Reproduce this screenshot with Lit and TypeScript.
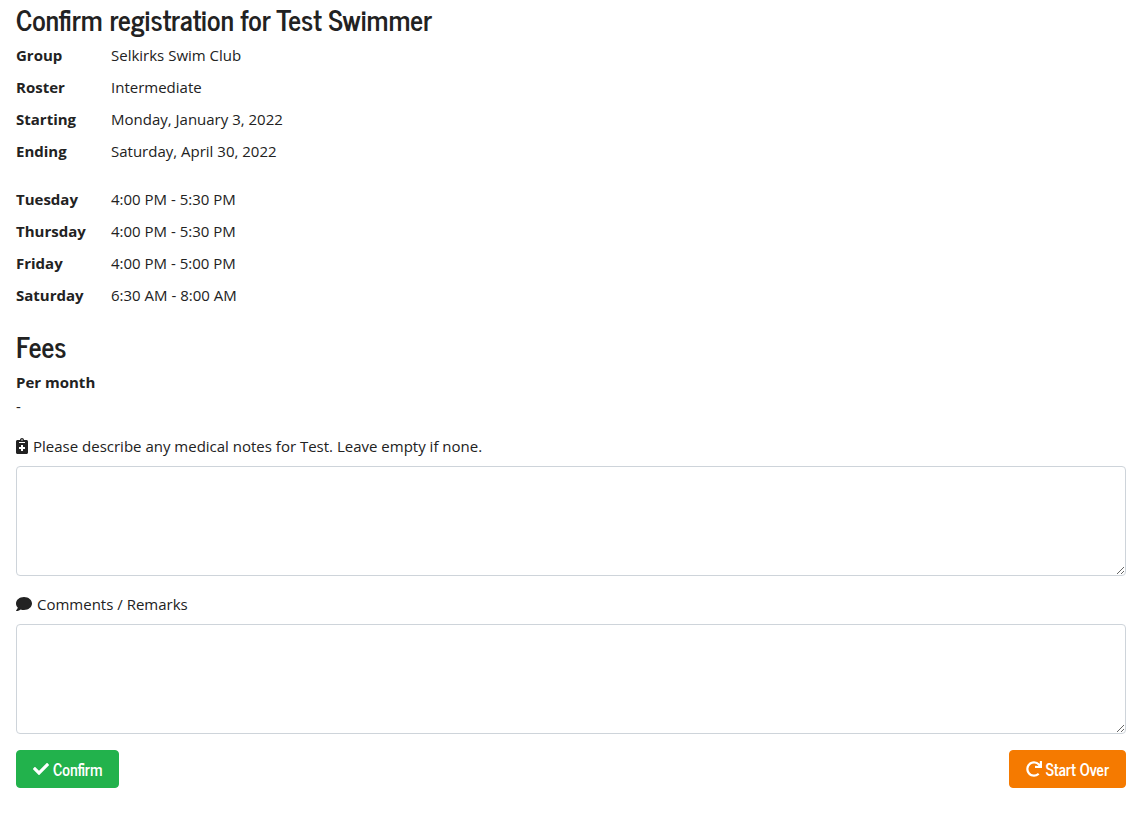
import { LitElement, html, css, svg } from "lit";
import { customElement } from "lit/decorators.js";

const icon = (width: number, path: string) => html`<svg
  class="icon"
  width=${width / 32}
  height="16"
  viewBox="0 0 ${width} 512"
  aria-hidden="true"
>${svg`<path fill="currentColor" d=${path}></path>`}</svg>`;

const NOTES =
  "M336 64h-80c0-35.3-28.7-64-64-64s-64 28.7-64 64H48C21.5 64 0 85.5 0 112v352c0 26.5 21.5 48 48 48h288c26.5 0 48-21.5 48-48V112c0-26.5-21.5-48-48-48zM192 40c13.3 0 24 10.7 24 24s-10.7 24-24 24-24-10.7-24-24 10.7-24 24-24zm96 304c0 4.4-3.6 8-8 8h-56v56c0 4.4-3.6 8-8 8h-48c-4.4 0-8-3.6-8-8v-56h-56c-4.4 0-8-3.6-8-8v-48c0-4.4 3.6-8 8-8h56v-56c0-4.4 3.6-8 8-8h48c4.4 0 8 3.6 8 8v56h56c4.4 0 8 3.6 8 8v48zm0-192c0 4.4-3.6 8-8 8H104c-4.4 0-8-3.6-8-8v-16c0-4.4 3.6-8 8-8h176c4.4 0 8 3.6 8 8v16z";
const COMMENT =
  "M256 32C114.6 32 0 125.1 0 240c0 49.6 21.4 95 57 130.7C44.5 421.1 2.7 466 2.2 466.5c-2.2 2.3-2.8 5.7-1.5 8.7S4.8 480 8 480c66.3 0 116-31.8 140.6-51.4 32.7 12.3 69 19.4 107.4 19.4 141.4 0 256-93.1 256-208S397.4 32 256 32z";
const CHECK =
  "M173.898 439.404l-166.4-166.4c-9.997-9.997-9.997-26.206 0-36.204l36.203-36.204c9.997-9.998 26.207-9.998 36.204 0L192 312.69 432.095 72.596c9.997-9.997 26.207-9.997 36.204 0l36.203 36.204c9.997 9.997 9.997 26.206 0 36.204l-294.4 294.401c-9.998 9.997-26.207 9.997-36.204-.001z";
const REDO =
  "M500.33 0h-47.41a12 12 0 0 0-12 12.57l4 82.76A247.42 247.42 0 0 0 256 8C119.34 8 7.9 119.53 8 256.19 8.1 393.07 119.1 504 256 504a247.1 247.1 0 0 0 166.18-63.91 12 12 0 0 0 .48-17.43l-34-34a12 12 0 0 0-16.38-.55A176 176 0 1 1 402.1 157.8l-101.53-4.87a12 12 0 0 0-12.57 12v47.41a12 12 0 0 0 12 12h200.33a12 12 0 0 0 12-12V12a12 12 0 0 0-12-12z";

const DETAILS = [
  ["Group", "Selkirks Swim Club"],
  ["Roster", "Intermediate"],
  ["Starting", "Monday, January 3, 2022"],
  ["Ending", "Saturday, April 30, 2022"],
];
const SCHEDULE = [
  ["Tuesday", "4:00 PM - 5:30 PM"],
  ["Thursday", "4:00 PM - 5:30 PM"],
  ["Friday", "4:00 PM - 5:00 PM"],
  ["Saturday", "6:30 AM - 8:00 AM"],
];

@customElement("app-root")
export class AppRoot extends LitElement {
  static styles = css`
    :host {
      display: block;
      padding: 2px 18px 28px 16px;
      background: #fff;
      color: #222;
      font: 400 15px/24px "Segoe UI", "Open Sans", "Noto Sans", sans-serif;
    }
    .title {
      margin: 0 0 7px;
      font: 700 28px/34px "News Cycle", "Liberation Sans Narrow", "Arial Narrow", sans-serif;
    }
    .list {
      display: grid;
      grid-template-columns: 95px 1fr;
      row-gap: 8px;
      margin: 0 0 24px;
    }
    .list.last {
      margin-bottom: 22px;
    }
    .list dt,
    .fees dt {
      font-weight: 700;
    }
    .list dd,
    .fees dd {
      margin: 0;
    }
    .fees {
      margin: 0 0 16px;
    }
    .field {
      margin-bottom: 16px;
    }
    .label {
      display: flex;
      align-items: center;
      gap: 5px;
      margin-bottom: 8px;
    }
    .icon {
      flex: none;
    }
    .box {
      display: block;
      box-sizing: border-box;
      width: 100%;
      height: 110px;
      margin: 0;
      padding: 6px 12px;
      border: 1px solid #ced4da;
      border-radius: 4px;
      background: #fff;
      color: #495057;
      font: inherit;
      resize: vertical;
    }
    .actions {
      display: flex;
      justify-content: space-between;
    }
    .btn {
      display: flex;
      align-items: center;
      gap: 4px;
      padding: 6px 16px;
      border: 1px solid transparent;
      border-radius: 4px;
      color: #fff;
      font: 700 16px/24px "News Cycle", "Liberation Sans Narrow", "Arial Narrow", sans-serif;
      cursor: pointer;
    }
    .confirm {
      background: #22b24c;
      border-color: #22b24c;
    }
    .restart {
      background: #f57a00;
      border-color: #f57a00;
    }
  `;

  private list(rows: string[][], name: string) {
    return html`<dl class=${name}>
      ${rows.map(([term, value]) => html`<dt>${term}</dt><dd>${value}</dd>`)}
    </dl>`;
  }

  render() {
    return html`
      <h3 class="title">Confirm registration for Test Swimmer</h3>
      ${this.list(DETAILS, "list")} ${this.list(SCHEDULE, "list last")}
      <h3 class="title">Fees</h3>
      <dl class="fees">
        <dt>Per month</dt>
        <dd>-</dd>
      </dl>
      <div class="field">
        <label class="label" for="medical">
          ${icon(384, NOTES)}
          <span>Please describe any medical notes for Test. Leave empty if none.</span>
        </label>
        <textarea class="box" id="medical"></textarea>
      </div>
      <div class="field">
        <label class="label" for="comments">
          ${icon(512, COMMENT)}
          <span>Comments / Remarks</span>
        </label>
        <textarea class="box" id="comments"></textarea>
      </div>
      <div class="actions">
        <button class="btn confirm" type="button">${icon(512, CHECK)}Confirm</button>
        <button class="btn restart" type="button">${icon(512, REDO)}Start Over</button>
      </div>
    `;
  }
}
